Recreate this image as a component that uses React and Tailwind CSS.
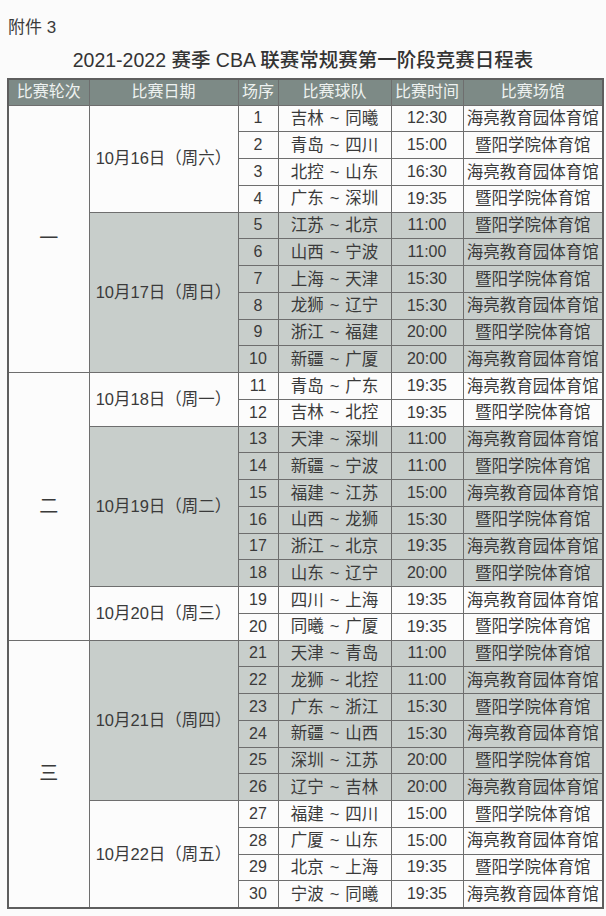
import React from "react";

const HL = "海亮教育园体育馆";
const JY = "暨阳学院体育馆";

const rounds = [
  {
    name: "一",
    days: [
      {
        date: "10月16日（周六）",
        games: [
          ["1", "吉林", "同曦", "12:30", HL],
          ["2", "青岛", "四川", "15:00", JY],
          ["3", "北控", "山东", "16:30", HL],
          ["4", "广东", "深圳", "19:35", JY],
        ],
      },
      {
        date: "10月17日（周日）",
        games: [
          ["5", "江苏", "北京", "11:00", JY],
          ["6", "山西", "宁波", "11:00", HL],
          ["7", "上海", "天津", "15:30", JY],
          ["8", "龙狮", "辽宁", "15:30", HL],
          ["9", "浙江", "福建", "20:00", JY],
          ["10", "新疆", "广厦", "20:00", HL],
        ],
      },
    ],
  },
  {
    name: "二",
    days: [
      {
        date: "10月18日（周一）",
        games: [
          ["11", "青岛", "广东", "19:35", HL],
          ["12", "吉林", "北控", "19:35", JY],
        ],
      },
      {
        date: "10月19日（周二）",
        games: [
          ["13", "天津", "深圳", "11:00", HL],
          ["14", "新疆", "宁波", "11:00", JY],
          ["15", "福建", "江苏", "15:00", HL],
          ["16", "山西", "龙狮", "15:30", JY],
          ["17", "浙江", "北京", "19:35", HL],
          ["18", "山东", "辽宁", "20:00", JY],
        ],
      },
      {
        date: "10月20日（周三）",
        games: [
          ["19", "四川", "上海", "19:35", HL],
          ["20", "同曦", "广厦", "19:35", JY],
        ],
      },
    ],
  },
  {
    name: "三",
    days: [
      {
        date: "10月21日（周四）",
        games: [
          ["21", "天津", "青岛", "11:00", JY],
          ["22", "龙狮", "北控", "11:00", HL],
          ["23", "广东", "浙江", "15:30", JY],
          ["24", "新疆", "山西", "15:30", HL],
          ["25", "深圳", "江苏", "20:00", JY],
          ["26", "辽宁", "吉林", "20:00", HL],
        ],
      },
      {
        date: "10月22日（周五）",
        games: [
          ["27", "福建", "四川", "15:00", JY],
          ["28", "广厦", "山东", "15:00", HL],
          ["29", "北京", "上海", "19:35", JY],
          ["30", "宁波", "同曦", "19:35", HL],
        ],
      },
    ],
  },
];

const font = {
  fontFamily: '"Liberation Sans", "Noto Sans CJK SC", sans-serif',
};

const cell = "border border-[#6e6e6e] p-0 text-center align-middle";

const App = () => {
  // 日期组交替底色：白 / 灰
  let dayIndex = 0;
  const rows = [];

  rounds.forEach((round) => {
    const roundSpan = round.days.reduce((n, d) => n + d.games.length, 0);
    round.days.forEach((day, di) => {
      const gray = dayIndex % 2 === 1;
      dayIndex++;
      const bg = gray ? "bg-[#c8cecb]" : "bg-[#fcfcfc]";
      day.games.forEach((g, gi) => {
        rows.push(
          <tr key={g[0]} className="h-[26.75px]">
            {di === 0 && gi === 0 && (
              <td
                rowSpan={roundSpan}
                className={`${cell} bg-[#fcfcfc] text-[19px]`}
              >
                {round.name}
              </td>
            )}
            {gi === 0 && (
              <td
                rowSpan={day.games.length}
                className={`${cell} ${bg} text-[16.5px]`}
              >
                {day.date}
              </td>
            )}
            <td className={`${cell} ${bg}`}>{g[0]}</td>
            <td className={`${cell} ${bg} text-[16.5px]`}>
              {g[1]}
              <span className="mx-[6px]">~</span>
              {g[2]}
            </td>
            <td className={`${cell} ${bg}`}>{g[3]}</td>
            <td className={`${cell} ${bg} text-[16.5px]`}>{g[4]}</td>
          </tr>
        );
      });
    });
  });

  return (
    <div
      className="w-[606px] h-[916px] bg-[#fbfbfb] text-[#3a3a3a] overflow-hidden"
      style={font}
    >
      <div className="pl-[8px] pt-[18px] text-[17px] leading-[20px]">
        附件 3
      </div>
      <div className="mt-[10px] text-center text-[19.5px] leading-[24px] font-medium text-[#333]">
        2021-2022 赛季 CBA 联赛常规赛第一阶段竞赛日程表
      </div>
      <table className="mt-[6px] ml-[7px] w-[595px] table-fixed border-collapse border-2 border-[#5e5e5e] text-[16px] leading-none">
        <colgroup>
          <col className="w-[81px]" />
          <col className="w-[149px]" />
          <col className="w-[40px]" />
          <col className="w-[113px]" />
          <col className="w-[72px]" />
          <col className="w-[140px]" />
        </colgroup>
        <thead>
          <tr className="h-[26px] bg-[#7d8a86] text-[#eef2f0]">
            <th className={`${cell} font-normal`}>比赛轮次</th>
            <th className={`${cell} font-normal`}>比赛日期</th>
            <th className={`${cell} font-normal`}>场序</th>
            <th className={`${cell} font-normal`}>比赛球队</th>
            <th className={`${cell} font-normal`}>比赛时间</th>
            <th className={`${cell} font-normal`}>比赛场馆</th>
          </tr>
        </thead>
        <tbody>{rows}</tbody>
      </table>
    </div>
  );
};

export default App;
